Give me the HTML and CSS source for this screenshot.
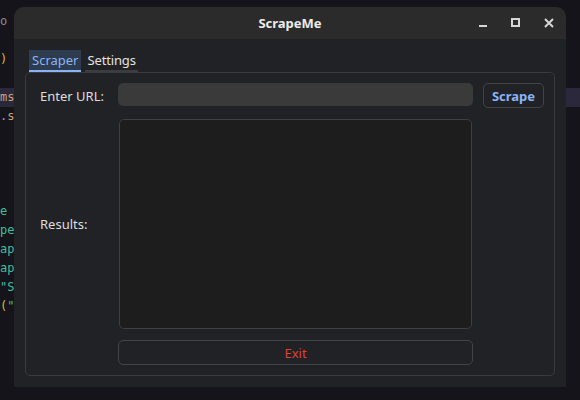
FILE: index.html
```html
<!DOCTYPE html>
<html>
<head>
<meta charset="utf-8">
<link rel="stylesheet" href="styles.css">
</head>
<body>
<div class="desktop">
  <div class="code">
    <div class="ln"><span class="c-grey">o</span></div>
    <div class="ln"></div>
    <div class="ln"><span class="c-yel">)</span></div>
    <div class="ln"></div>
    <div class="ln sel"><span class="c-org">ms</span></div>
    <div class="ln"><span class="c-pur">.</span><span class="c-org">s</span></div>
    <div class="ln"></div>
    <div class="ln"></div>
    <div class="ln"></div>
    <div class="ln"></div>
    <div class="ln"><span class="c-grn">e</span></div>
    <div class="ln"><span class="c-grn">pe</span></div>
    <div class="ln"><span class="c-grn">ap</span></div>
    <div class="ln"><span class="c-grn">ap</span></div>
    <div class="ln"><span class="c-grn">"S</span></div>
    <div class="ln"><span class="c-yel">(</span><span class="c-grn">"</span></div>
  </div>

  <div class="window">
    <div class="titlebar">
      <span class="title">ScrapeMe</span>
      <div class="controls">
        <svg class="ctl" width="10" height="10" viewBox="0 0 10 10"><rect x="1" y="7" width="8" height="2" fill="#d6d6d6"/></svg>
        <svg class="ctl" width="10" height="10" viewBox="0 0 10 10"><rect x="1" y="1" width="7" height="7" fill="none" stroke="#d6d6d6" stroke-width="2"/></svg>
        <svg class="ctl" width="10" height="10" viewBox="0 0 10 10"><path d="M1 1 L9 9 M9 1 L1 9" stroke="#d6d6d6" stroke-width="2"/></svg>
      </div>
    </div>
    <div class="body">
      <div class="tabs">
        <div class="tab active">Scraper</div>
        <div class="tab">Settings</div>
      </div>
      <div class="panel">
        <div class="label">Enter URL:</div>
        <div class="entry"></div>
        <div class="btn scrape">Scrape</div>
        <div class="label">Results:</div>
        <div class="results"></div>
        <div></div>
        <div></div>
        <div class="btn exit">Exit</div>
      </div>
    </div>
  </div>
</div>
</body>
</html>
```

FILE: styles.css
```css
html, body {
  margin: 0;
  padding: 0;
  background: #15141a;
  width: 580px;
  height: 400px;
  overflow: hidden;
  font-family: "Noto Sans", "DejaVu Sans", sans-serif;
}
.desktop {
  position: relative;
  width: 580px;
  height: 400px;
}
.code {
  padding-top: 12px;
  font-family: "DejaVu Sans Mono", monospace;
  font-size: 12px;
}
.ln {
  height: 19px;
  line-height: 19px;
  white-space: nowrap;
}
.sel {
  background: #2a283a;
}
.c-grey { color: #8a8a8a; }
.c-yel { color: #d9b936; }
.c-org { color: #c9a27e; }
.c-pur { color: #b48ad8; }
.c-grn { color: #3fbf9c; }

.window {
  position: absolute;
  left: 14px;
  top: 7px;
  width: 552px;
  height: 380px;
  background: #212226;
  border-radius: 10px 10px 0 0;
  overflow: hidden;
  display: flex;
  flex-direction: column;
}
.titlebar {
  height: 32px;
  background: #2b2b2c;
  display: flex;
  align-items: center;
  justify-content: center;
  position: relative;
}
.title {
  color: #ececec;
  font-weight: bold;
  font-size: 13px;
}
.controls {
  position: absolute;
  right: 12px;
  top: 11px;
  display: flex;
  gap: 23px;
}
.ctl { display: block; }
.body {
  padding: 11px 11px 11px 11px;
  display: flex;
  flex-direction: column;
}
.tabs {
  display: flex;
  gap: 4px;
  padding-left: 4px;
  height: 22px;
}
.tab {
  height: 20px;
  padding: 0 3px;
  font-size: 13px;
  line-height: 20px;
  color: #e2e2e2;
  border-bottom: 2px solid #3d3d40;
}
.tab + .tab {
  padding: 0 2px;
  letter-spacing: -0.15px;
}
.tab.active {
  background: #2e3c50;
  color: #8ab4f8;
  border-bottom-color: #8ab4f8;
}
.panel {
  border: 1px solid #3b3b3e;
  border-radius: 5px;
  padding: 10px 10px 10px 14px;
  display: grid;
  grid-template-columns: 68px 355px 61px;
  grid-template-rows: 25px 210px 25px;
  column-gap: 10px;
  row-gap: 11px;
}
.label {
  color: #dedede;
  font-size: 13px;
  align-self: center;
}
.entry {
  height: 23px;
  background: #3a3a3b;
  border-radius: 5px;
  align-self: start;
}
.btn {
  box-sizing: border-box;
  border: 1px solid #444448;
  border-radius: 5px;
  display: flex;
  align-items: center;
  justify-content: center;
  font-size: 13px;
}
.scrape {
  color: #8ab4f8;
  font-weight: bold;
}
.exit {
  color: #db4437;
}
.results {
  margin: 0 1px;
  background: #1d1d1d;
  border: 1px solid #3f3f41;
  border-radius: 5px;
}
```
